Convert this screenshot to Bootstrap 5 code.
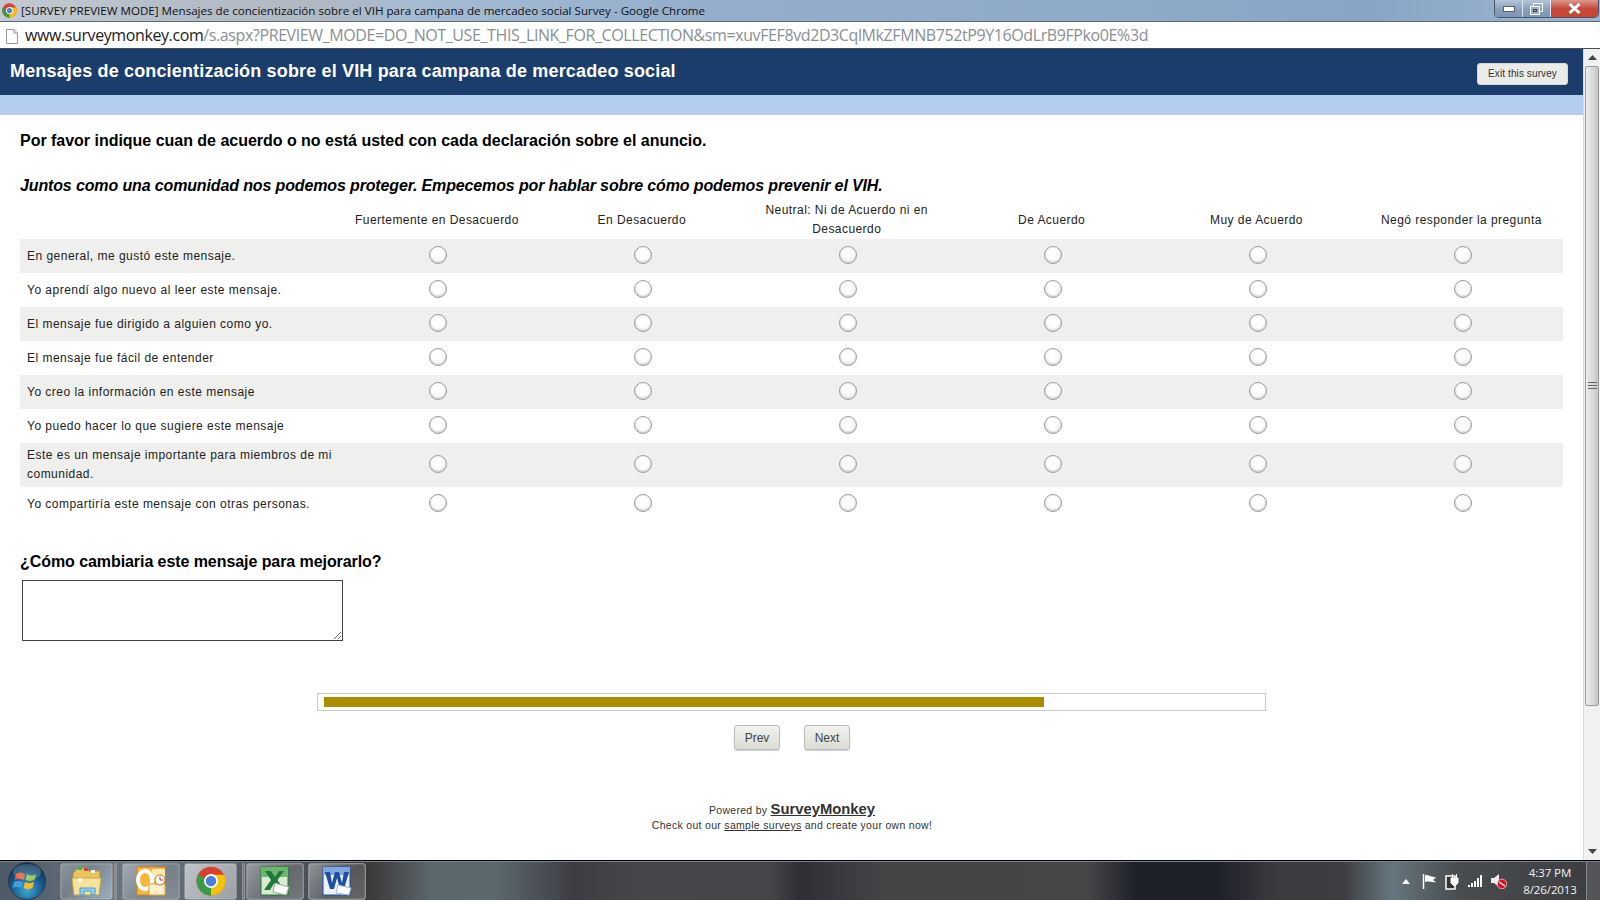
<!DOCTYPE html>
<html lang="es">
<head>
<meta charset="utf-8">
<title>SurveyMonkey preview</title>
<link href="https://cdn.jsdelivr.net/npm/bootstrap@5.3.0/dist/css/bootstrap.min.css" rel="stylesheet">
<style>
html,body{height:900px;overflow:hidden;background:#fff}
body{font-family:"Liberation Sans",Arial,sans-serif;color:#000}
.shell{height:900px;width:1600px}
.wintitle{height:22px;flex:none;background:linear-gradient(90deg,#c4cad1 0,#b5bec8 10%,#b0b8c2 20%,#a5bbd3 26%,#93adcb 45%,#8faac8 70%,#88a5c6 85%,#9db5cf 100%);border-bottom:1px solid #5d6b7a;position:relative;font-family:"Open Sans","Noto Sans",sans-serif;font-size:11.6px;color:#111;padding-left:21px;line-height:21px;white-space:nowrap}
.wintitle svg.favi{position:absolute;left:2px;top:3px}
.winbtns{position:absolute;right:1px;top:0;height:18px;width:105px;border:1px solid #47566a;border-top:0;border-radius:0 0 5px 5px;overflow:hidden}
.winbtns>div{height:100%;display:flex;align-items:center;justify-content:center}
.wb-min,.wb-max{flex:0 0 28px;background:linear-gradient(#b4c5d8,#8ba3bd 50%,#7d96b1);border-right:1px solid #dfe7ef}
.wb-close{flex:1;background:linear-gradient(#dc9a90,#c5493a 50%,#c9432f)}
.addrbar{height:27px;flex:none;background:#fff;border-bottom:1px solid #4a4f55;font-family:"Open Sans","Noto Sans",sans-serif;font-size:16px;letter-spacing:-.4px;color:#8a8f96;line-height:27px;padding-left:6px;white-space:nowrap;overflow:hidden}
.addrbar b{font-weight:400;color:#222}
.addrbar svg{margin-right:7px;vertical-align:-3px}
.mainzone{min-height:0;flex:1}
.pagezone{min-width:0}
.svhead{height:46px;flex:none;background:#1a3d6b;color:#fff;padding:0 15px 0 10px}
.svhead h1{font-size:18px;font-weight:700;margin:0 0 1px;letter-spacing:.16px}
.exitbtn{width:91px;height:22px;background:#ebebe8;border:1px solid #d6d6d2;border-radius:3px;color:#333;font-size:10px;letter-spacing:.1px;padding:0;line-height:20px;margin-top:4px}
.svband{height:20px;flex:none;background:#b3cdf0}
.qhead{font-size:16px;font-weight:700;line-height:20px;margin:0 0 0 20px;color:#000}
.q1{margin-top:16px;letter-spacing:-.02px}
.q2{margin-top:25px;font-style:italic;letter-spacing:-.135px}
.q3{margin-top:31px;letter-spacing:-.07px}
.matrixwrap{width:1543px;margin:5px 0 0 20px;overflow:hidden}
.matrix{width:1545.4px;table-layout:fixed;border-collapse:collapse;font-size:12px;letter-spacing:.48px;line-height:19px}
.matrix .labelcol{width:316px}
.matrix th{font-weight:400;text-align:center;padding:0 3px 0 0;height:38px;color:#222;vertical-align:middle;letter-spacing:.44px}
.matrix td{height:34px;padding:0;vertical-align:middle;color:#222;text-align:center}
.matrix td.rowlab{padding:0 0 0 7px;text-align:left}
.matrix tr.tall td{height:44px}
.matrix tbody tr:nth-child(odd) td{background:#efefed}
.rdo{appearance:none;-webkit-appearance:none;display:block;margin:-2px auto 0;width:18px;height:18px;border-radius:50%;border:1px solid #9c9c9c;background:radial-gradient(circle at 50% 42%,#fff 0,#fdfdfd 50%,#e2e2e2 85%,#c8c8c8 100%);box-shadow:inset 0 -1px 2px #d0d0d0}
.fbox{display:block;width:321px;height:61px;margin:8px 0 0 22px;border:1px solid #444;border-radius:0;font-size:13px}
.pbox{width:949px;height:18px;border:1px solid #c9c9c9;border-radius:0;background:#fff;padding:3px 5px 3px 6px;margin:52px 0 0 317px}
.pbox .progress-bar{background:#ab8e00;height:10px}
.navbtns{margin:14px 0 0;gap:24px;padding-left:734px}
.navbtn{width:46px;height:25px;background:linear-gradient(#f2f2ee,#dcdcd6);border:1px solid #bbb;border-radius:3px;box-shadow:0 1px 1px #ccc;font-size:12px;line-height:22px;padding:0;color:#444}
.poweredby{margin:53px 0 0;padding-left:1px;width:1583px;text-align:center;font-size:10.5px;line-height:15px;letter-spacing:.3px;color:#333}
.poweredby a{color:#333}
.poweredby .brand{font-size:14.8px;line-height:12px;font-weight:700;letter-spacing:0}
.vscroll{width:17px;flex:none;background:#f1f1f1;border-left:1px solid #d9d9d9}
.vs-arrow{height:17px;flex:none}
.vs-thumb{height:640px;margin:0 1px;flex:none;background:linear-gradient(90deg,#eee,#d8d8d8 60%,#c4c4c4);border:1px solid #9a9a9a;border-radius:2px}
.vs-arrow svg{display:block;margin:6px auto 0}
.vs-track{min-height:0}
.taskbar{height:40px;flex:none;border-top:1px solid #000;box-shadow:inset 0 1px 0 #7d8388;background:linear-gradient(90deg,#4d5a66 0,#6a7783 8%,#4a4e52 20%,#3b3839 23%,#5a676c 27%,#5b686d 31%,#3c3c42 36%,#47474b 40%,#46464a 48%,#2e2f35 50%,#444447 55%,#464648 68%,#1f2129 71%,#1e2028 76%,#3c3c40 80%,#3e3e42 84%,#66767e 87%,#4a4d50 91%,#3b3d40 100%);color:#f4f4f4;padding-top:1px}
.orbwrap{width:58px;flex:none;padding-left:7px}
.tbtn{height:37px;border:1px solid #8b9095;border-radius:3px;background:linear-gradient(135deg,rgba(255,255,255,.38),rgba(255,255,255,.12) 55%,rgba(255,255,255,.22));box-shadow:inset 0 0 1px #fff;flex:none;display:flex;align-items:center;justify-content:center}
.tb-a{width:53px;margin-left:2px;background:linear-gradient(135deg,rgba(255,255,255,.3),rgba(255,255,255,.15) 40%,rgba(190,215,235,.6))}
.tb-b{width:58px;margin-left:5px}
.tb-c{width:53px;margin-left:4px;background:linear-gradient(135deg,rgba(255,255,255,.6),rgba(255,255,255,.4))}
.tb-d{width:58px;margin-left:1px}
.tb-e{width:58px;margin-left:4px}
.tsliver{flex:none;width:3px;height:37px;border:1px solid #8b9095;border-radius:1px;background:rgba(255,255,255,.2)}
.sl-a{margin-left:1px}.sl-b{margin-left:5px}
.tray svg{display:block;flex:none}
.tg-flag{margin-left:12px}.tg-next{margin-left:8px}
.clock{font-family:"Open Sans","Noto Sans",sans-serif;font-size:11.5px;line-height:17px;text-align:center;width:60px;margin-left:13px;letter-spacing:-.1px}
.showdesk{width:14px;height:39px;border-left:1px solid #888;margin-left:6px;background:rgba(255,255,255,.12)}
</style>
</head>
<body>
<div class="shell d-flex flex-column">
  <div class="wintitle">
    <svg class="favi" width="15" height="15" viewBox="0 0 24 24"><circle cx="12" cy="12" r="11.5" fill="#d8412f"/><path d="M12 12 2 17.7A11.5 11.5 0 0 0 12 23.5Z" fill="#3a9b42"/><path d="M12 12V23.5A11.5 11.5 0 0 0 22.5 7H12Z" fill="#f4c20d"/><path d="M12 12 2 17.7A11.5 11.5 0 0 1 1.5 7Z" fill="#3a9b42"/><circle cx="12" cy="12" r="5.6" fill="#fff"/><circle cx="12" cy="12" r="4.2" fill="#4a80d9"/></svg>
    [SURVEY PREVIEW MODE] Mensajes de concientización sobre el VIH para campana de mercadeo social Survey - Google Chrome
    <div class="winbtns d-flex">
      <div class="wb-min"><svg width="12" height="6"><rect x=".5" y=".5" width="11" height="5" fill="#fff" stroke="#4f5f70"/></svg></div>
      <div class="wb-max"><svg width="13" height="12"><rect x="3.5" y=".5" width="9" height="8" fill="none" stroke="#fff"/><rect x=".5" y="3.5" width="9" height="8" fill="#9db0c4" stroke="#fff"/><rect x="3.5" y="6.5" width="3" height="2" fill="none" stroke="#33445a"/></svg></div>
      <div class="wb-close"><svg width="13" height="11"><path d="M1.5 1 11.5 10M11.5 1 1.5 10" stroke="#fff" stroke-width="3"/></svg></div>
    </div>
  </div>
  <div class="addrbar"><svg width="12" height="15" viewBox="0 0 12 15"><path d="M.5.5H8L11.5 4V14.5H.5Z" fill="#fff" stroke="#9a9a9a"/><path d="M8 .5V4H11.5" fill="#ddd" stroke="#9a9a9a"/></svg><b>www.surveymonkey.com</b>/s.aspx?PREVIEW_MODE=DO_NOT_USE_THIS_LINK_FOR_COLLECTION&amp;sm=xuvFEF8vd2D3CqlMkZFMNB752tP9Y16OdLrB9FPko0E%3d</div>
  <div class="mainzone d-flex">
    <div class="pagezone flex-grow-1 d-flex flex-column">
      <div class="svhead d-flex align-items-center justify-content-between">
        <h1>Mensajes de concientización sobre el VIH para campana de mercadeo social</h1>
        <button type="button" class="btn exitbtn">Exit this survey</button>
      </div>
      <div class="svband"></div>
      <p class="qhead q1">Por favor indique cuan de acuerdo o no está usted con cada declaración sobre el anuncio.</p>
      <p class="qhead q2">Juntos como una comunidad nos podemos proteger. Empecemos por hablar sobre cómo podemos prevenir el VIH.</p>
      <div class="matrixwrap">
      <table class="matrix">
        <colgroup><col class="labelcol"><col span="6"></colgroup>
        <thead><tr><th></th><th>Fuertemente en Desacuerdo</th><th>En Desacuerdo</th><th>Neutral: Ni de Acuerdo ni en Desacuerdo</th><th>De Acuerdo</th><th>Muy de Acuerdo</th><th>Negó responder la pregunta</th></tr></thead>
        <tbody>
          <tr><td class="rowlab">En general, me gustó este mensaje.</td><td><input class="rdo" type="radio" name="r1"></td><td><input class="rdo" type="radio" name="r1"></td><td><input class="rdo" type="radio" name="r1"></td><td><input class="rdo" type="radio" name="r1"></td><td><input class="rdo" type="radio" name="r1"></td><td><input class="rdo" type="radio" name="r1"></td></tr>
          <tr><td class="rowlab">Yo aprendí algo nuevo al leer este mensaje.</td><td><input class="rdo" type="radio" name="r2"></td><td><input class="rdo" type="radio" name="r2"></td><td><input class="rdo" type="radio" name="r2"></td><td><input class="rdo" type="radio" name="r2"></td><td><input class="rdo" type="radio" name="r2"></td><td><input class="rdo" type="radio" name="r2"></td></tr>
          <tr><td class="rowlab">El mensaje fue dirigido a alguien como yo.</td><td><input class="rdo" type="radio" name="r3"></td><td><input class="rdo" type="radio" name="r3"></td><td><input class="rdo" type="radio" name="r3"></td><td><input class="rdo" type="radio" name="r3"></td><td><input class="rdo" type="radio" name="r3"></td><td><input class="rdo" type="radio" name="r3"></td></tr>
          <tr><td class="rowlab">El mensaje fue fácil de entender</td><td><input class="rdo" type="radio" name="r4"></td><td><input class="rdo" type="radio" name="r4"></td><td><input class="rdo" type="radio" name="r4"></td><td><input class="rdo" type="radio" name="r4"></td><td><input class="rdo" type="radio" name="r4"></td><td><input class="rdo" type="radio" name="r4"></td></tr>
          <tr><td class="rowlab">Yo creo la información en este mensaje</td><td><input class="rdo" type="radio" name="r5"></td><td><input class="rdo" type="radio" name="r5"></td><td><input class="rdo" type="radio" name="r5"></td><td><input class="rdo" type="radio" name="r5"></td><td><input class="rdo" type="radio" name="r5"></td><td><input class="rdo" type="radio" name="r5"></td></tr>
          <tr><td class="rowlab">Yo puedo hacer lo que sugiere este mensaje</td><td><input class="rdo" type="radio" name="r6"></td><td><input class="rdo" type="radio" name="r6"></td><td><input class="rdo" type="radio" name="r6"></td><td><input class="rdo" type="radio" name="r6"></td><td><input class="rdo" type="radio" name="r6"></td><td><input class="rdo" type="radio" name="r6"></td></tr>
          <tr class="tall"><td class="rowlab">Este es un mensaje importante para miembros de mi comunidad.</td><td><input class="rdo" type="radio" name="r7"></td><td><input class="rdo" type="radio" name="r7"></td><td><input class="rdo" type="radio" name="r7"></td><td><input class="rdo" type="radio" name="r7"></td><td><input class="rdo" type="radio" name="r7"></td><td><input class="rdo" type="radio" name="r7"></td></tr>
          <tr><td class="rowlab">Yo compartiría este mensaje con otras personas.</td><td><input class="rdo" type="radio" name="r8"></td><td><input class="rdo" type="radio" name="r8"></td><td><input class="rdo" type="radio" name="r8"></td><td><input class="rdo" type="radio" name="r8"></td><td><input class="rdo" type="radio" name="r8"></td><td><input class="rdo" type="radio" name="r8"></td></tr>
        </tbody>
      </table>
      </div>
      <p class="qhead q3">¿Cómo cambiaria este mensaje para mejorarlo?</p>
      <textarea class="fbox" aria-label="Comentario"></textarea>
      <div class="progress pbox"><div class="progress-bar" style="width:76.9%"></div></div>
      <div class="navbtns d-flex">
        <button type="button" class="btn navbtn">Prev</button>
        <button type="button" class="btn navbtn">Next</button>
      </div>
      <div class="poweredby">Powered by <a class="brand" href="#">SurveyMonkey</a><br>Check out our <a href="#">sample surveys</a> and create your own now!</div>
    </div>
    <div class="vscroll d-flex flex-column">
      <div class="vs-arrow"><svg width="9" height="5"><path d="M4.5 0 9 5H0Z" fill="#444"/></svg></div>
      <div class="vs-thumb d-flex align-items-center justify-content-center"><svg width="9" height="8"><path d="M0 .5H9M0 3.500H9M0 6.500H9" stroke="#666"/></svg></div>
      <div class="vs-track flex-grow-1"></div>
      <div class="vs-arrow"><svg width="9" height="5"><path d="M0 0H9L4.500 5Z" fill="#444"/></svg></div>
    </div>
  </div>
  <div class="taskbar d-flex align-items-center">
    <div class="orbwrap">
      <svg width="40" height="38" viewBox="0 0 40 38"><defs><radialGradient id="orb" cx="50%" cy="75%" r="70%"><stop offset="0" stop-color="#3fa7d8"/><stop offset=".6" stop-color="#17588c"/><stop offset="1" stop-color="#0c3355"/></radialGradient></defs><circle cx="20" cy="19" r="18.5" fill="url(#orb)" stroke="#2d3a44"/><path d="M9 12c3-2 6-2 9 0l-1.500 6c-3-1.500-6-1.500-9 0Z" fill="#e4582a"/><path d="M20 12c3 2 6 2 9 0l-1.500 6c-3 1.500-6 1.500-9 0Z" fill="#8fc046"/><path d="M7 20c3-1.500 6-1.500 9 0l-1.500 6c-3-1.500-6-1.500-9 0Z" fill="#3c9fe0"/><path d="M18 20c3 1.500 6 1.500 9 0l-1.500 6c-3 1.500-6 1.500-9 0Z" fill="#f4bd2d"/><ellipse cx="20" cy="10" rx="14" ry="8" fill="#fff" opacity=".18"/></svg>
    </div>
    <div class="tbtn tb-a"><svg width="32" height="32" viewBox="0 0 32 32"><path d="M2 8 7 3H15L18 6H29V24H2Z" fill="#e9c45f" stroke="#b08d35"/><rect x="7" y="2" width="4" height="3" fill="#3fb34f"/><rect x="13" y="3" width="4" height="3" fill="#d8412f"/><rect x="20" y="5" width="4" height="3" fill="#fff"/><path d="M1 13H30L28 30H3Z" fill="#f6e29c" stroke="#c7a84d"/><path d="M9 23H24V30H20V26H13V30H9Z" fill="#8fd0ee" stroke="#4d9cc6"/><circle cx="9" cy="15" r="2" fill="#fff"/></svg></div>
    <div class="tsliver sl-a"></div>
    <div class="tb-b tbtn"><svg width="31" height="30" viewBox="0 0 31 30"><rect x="1" y="1" width="28" height="28" fill="#f6b637" stroke="#d4811a"/><rect x="16" y="3" width="13" height="12" fill="#fce8b0"/><ellipse cx="9" cy="14" rx="7" ry="9" fill="none" stroke="#fff" stroke-width="4"/><path d="M13 18 29 18V29H13Z" fill="#fdf0c8" stroke="#d4a040"/><circle cx="24" cy="14" r="5" fill="#fff" stroke="#d66b1a"/><path d="M24 11V14H27" stroke="#c2410c" fill="none"/></svg></div>
    <div class="tb-c tbtn"><svg width="30" height="30" viewBox="0 0 24 24"><circle cx="12" cy="12" r="11.500" fill="#d8412f"/><path d="M12 12 2 17.700A11.500 11.500 0 0 0 12 23.500Z" fill="#3a9b42"/><path d="M12 12V23.500A11.500 11.500 0 0 0 22.500 7H12Z" fill="#f4c20d"/><path d="M12 12 2 17.700A11.500 11.500 0 0 1 1.500 7Z" fill="#3a9b42"/><circle cx="12" cy="12" r="5.600" fill="#fff"/><circle cx="12" cy="12" r="4.200" fill="#4a80d9"/></svg></div>
    <div class="tsliver sl-b"></div>
    <div class="tb-d tbtn"><svg width="30" height="30" viewBox="0 0 30 30"><rect x="1" y="1" width="27" height="28" fill="#d9ead3" stroke="#1e7a3a"/><rect x="1" y="1" width="27" height="10" fill="#6fb56f"/><path d="M5 5H11L15 11 19 5H24L17.500 14 24 24H18L14 17.500 10 24H4L11 14Z" fill="#1e7a3a"/><path d="M15 17 29 21 26 29 13 26Z" fill="#fff" stroke="#8ab08a"/></svg></div>
    <div class="tb-e tbtn"><svg width="30" height="30" viewBox="0 0 30 30"><rect x="1" y="1" width="27" height="28" fill="#eaf1fb" stroke="#1e4fa3"/><rect x="1" y="1" width="27" height="8" fill="#7fa7e0"/><path d="M3 6H8L10 17 13 6H17L20 17 22 6H27L22 23H18L15 12 12 23H8Z" fill="#1e4fa3"/><path d="M16 19 29 22 27 29 14 27Z" fill="#fff" stroke="#9fb4d6"/></svg></div>
    <div class="flex-grow-1"></div>
    <div class="tray d-flex align-items-center">
      <svg width="8" height="5"><path d="M4 0 8 5H0Z" fill="#fff"/></svg>
      <svg class="tg-flag" width="15" height="15" viewBox="0 0 15 15"><path d="M1.500 0V15" stroke="#fff" stroke-width="1.500"/><path d="M3 1.500C6 0 8 3 10 2.500L14 3.500 11 6 14 8C10 9 6 6.500 3 8Z" fill="#fff"/></svg>
      <svg class="tg-next" width="15" height="17" viewBox="0 0 15 17"><path d="M1 3H10V16H1Z" fill="#333" stroke="#fff" stroke-width="1.500"/><path d="M6 5H13V10L10.500 12.500H8.500L6 10ZM7.500 1V5M11.500 1V5" fill="#fff" stroke="#fff"/></svg>
      <svg class="tg-next" width="15" height="12" viewBox="0 0 15 12"><rect x="0" y="10" width="2" height="2" fill="#fff"/><rect x="3" y="8" width="2" height="4" fill="#fff"/><rect x="6" y="6" width="2" height="6" fill="#fff"/><rect x="9" y="3" width="2" height="9" fill="#fff"/><rect x="12" y="0" width="2" height="12" fill="#fff"/></svg>
      <svg class="tg-next" width="16" height="15" viewBox="0 0 16 15"><path d="M0 4H3L8 0V13L3 9H0Z" fill="#eee"/><circle cx="11" cy="10" r="4.800" fill="#e0101c" stroke="#fff" stroke-width=".6"/><path d="M8 8 14 12" stroke="#fff" stroke-width="1.500"/></svg>
      <div class="clock">4:37 PM<br>8/26/2013</div>
      <div class="showdesk"></div>
    </div>
  </div>
</div>
</body>
</html>
